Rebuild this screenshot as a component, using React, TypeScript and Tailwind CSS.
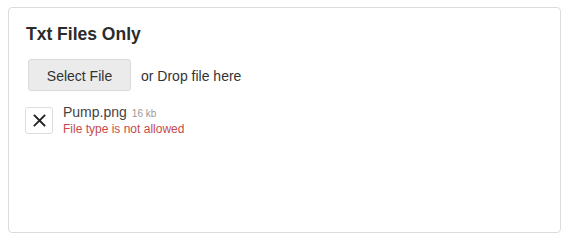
import React from "react";

export default function App() {
  return (
    <div className="w-[570px] h-[240px] bg-white pt-[7px] pl-[8px]" style={{ fontFamily: '"Liberation Sans", Arial, sans-serif' }}>
      <div className="w-[553px] h-[226px] border border-[#dcdcdc] rounded-[4px] pt-[16px] pl-[17px] flex flex-col text-[#333]">
        <h1 className="text-[17.5px] leading-[20px] font-bold text-[#2b2b2b]">Txt Files Only</h1>
        <div className="mt-[15px] ml-[2px] flex items-center">
          <button className="h-[32px] w-[103px] bg-[#ebebeb] border border-[#dadada] rounded-[3px] text-[14px] leading-[16px] text-[#333] flex items-center justify-center pt-[1px]">
            Select File
          </button>
          <span className="ml-[10px] text-[14px] leading-[16px] pt-[1px] text-[#333]">or Drop file here</span>
        </div>
        <div className="mt-[13px] ml-[-1px] flex items-center">
          <button className="w-[28px] h-[27px] border border-[#dddddd] rounded-[3px] bg-white flex items-center justify-center">
            <svg width="13" height="13" viewBox="0 0 13 13" fill="none" stroke="#222" strokeWidth="1.8" strokeLinecap="square">
              <path d="M1.5 1.5 L11.5 11.5 M11.5 1.5 L1.5 11.5" />
            </svg>
          </button>
          <div className="ml-[10px] flex flex-col">
            <div className="flex items-baseline">
              <span className="text-[14px] leading-[16px] text-[#444]">Pump.png</span>
              <span className="ml-[5px] text-[10px] leading-[16px] text-[#999]">16 kb</span>
            </div>
            <span className="text-[12px] leading-[14px] text-[#c64b4b]">File type is not allowed</span>
          </div>
        </div>
      </div>
    </div>
  );
}
